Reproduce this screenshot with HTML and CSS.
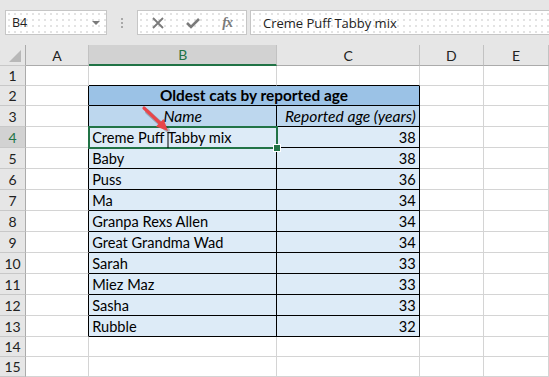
FILE: index.html
```html
<!DOCTYPE html>
<html lang="en">
<head>
    <meta charset="UTF-8">
    <title>Oldest cats</title>
    <link rel="stylesheet" href="styles.css">
</head>
<body>
    <div class="toolbar">
        <div class="namebox">
            <span>B4</span>
            <span class="caret"></span>
        </div>
        <div class="grip"></div>
        <div class="fbtns">
            <svg width="12" height="12" viewBox="0 0 12 12"><path d="M1 1 L11 11 M11 1 L1 11" stroke="#7a7a7a" stroke-width="1.8" fill="none"/></svg>
            <svg width="14" height="12" viewBox="0 0 14 12"><path d="M1 6 L5 10 L13 2" stroke="#7a7a7a" stroke-width="2.6" fill="none"/></svg>
            <span class="fx">fx</span>
        </div>
        <div class="finput">Creme Puff Tabby mix</div>
    </div>

    <div class="sheetWrap">
        <table class="sheet">
            <colgroup>
                <col style="width:26px">
                <col style="width:63px">
                <col style="width:188px">
                <col style="width:142px">
                <col style="width:64px">
                <col style="width:65px">
            </colgroup>
            <tr class="hdr">
                <th class="corner"><span class="tri"></span></th>
                <th>A</th><th class="selCol">B</th><th>C</th><th>D</th><th>E</th>
            </tr>
            <tr class="r20">
                <th>1</th><td></td><td class="topB"></td><td class="topB"></td><td></td><td></td>
            </tr>
            <tr class="r20">
                <th>2</th><td class="leftB"></td><td class="t title" colspan="2">Oldest cats by reported age</td><td></td><td></td>
            </tr>
            <tr>
                <th>3</th><td class="leftB"></td><td class="t sub center">Name</td><td class="t sub num">Reported age (years)</td><td></td><td></td>
            </tr>
            <tr>
                <th class="selRow">4</th><td class="leftB"></td><td class="t active">Creme Puff Tabby mix</td><td class="t num">38</td><td></td><td></td>
            </tr>
            <tr>
                <th>5</th><td class="leftB"></td><td class="t">Baby</td><td class="t num">38</td><td></td><td></td>
            </tr>
            <tr>
                <th>6</th><td class="leftB"></td><td class="t">Puss</td><td class="t num">36</td><td></td><td></td>
            </tr>
            <tr>
                <th>7</th><td class="leftB"></td><td class="t">Ma</td><td class="t num">34</td><td></td><td></td>
            </tr>
            <tr>
                <th>8</th><td class="leftB"></td><td class="t">Granpa Rexs Allen</td><td class="t num">34</td><td></td><td></td>
            </tr>
            <tr>
                <th>9</th><td class="leftB"></td><td class="t">Great Grandma Wad</td><td class="t num">34</td><td></td><td></td>
            </tr>
            <tr>
                <th>10</th><td class="leftB"></td><td class="t">Sarah</td><td class="t num">33</td><td></td><td></td>
            </tr>
            <tr>
                <th>11</th><td class="leftB"></td><td class="t">Miez Maz</td><td class="t num">33</td><td></td><td></td>
            </tr>
            <tr>
                <th>12</th><td class="leftB"></td><td class="t">Sasha</td><td class="t num">33</td><td></td><td></td>
            </tr>
            <tr>
                <th>13</th><td class="leftB"></td><td class="t">Rubble</td><td class="t num">32</td><td></td><td></td>
            </tr>
            <tr class="r20">
                <th>14</th><td></td><td></td><td></td><td></td><td></td>
            </tr>
            <tr class="r20">
                <th>15</th><td></td><td></td><td></td><td></td><td></td>
            </tr>
        </table>

        <!-- pointer arrow + text cursor drawn over the sheet -->
        <svg class="pointer" width="40" height="50" viewBox="0 0 40 50">
            <path d="M6 5 L26 23" stroke="rgba(0,0,0,0.22)" stroke-width="5" stroke-linecap="round" fill="none" transform="translate(1.5 2)"/>
            <path d="M4 3 L22 20" stroke="#e8464a" stroke-width="3.2" stroke-linecap="round" fill="none"/>
            <path d="M28 26 L16 21.5 L23.5 14 Z" fill="#e8464a"/>
            <path d="M28 27 L28 43" stroke="#000" stroke-width="1"/>
        </svg>
    </div>
</body>
</html>
```

FILE: styles.css
```css
*{
    box-sizing: border-box;
}

body{
    margin: 0;
    background: #fff;
    font-family: Lato, "Liberation Sans", sans-serif;
    overflow: hidden;
}

/* formula bar */
.toolbar{
    display: flex;
    align-items: flex-start;
    height: 45px;
    padding: 10px 0 0 5px;
    background: #e6e6e6;
    white-space: nowrap;
}

.namebox, .fbtns, .finput{
    height: 25px;
    border: 1px solid #c6c6c6;
    background-color: #fff;
    background-image: radial-gradient(#e2e2e2 0.7px, transparent 0.9px);
    background-size: 6px 6px;
}

.namebox{
    width: 102px;
    display: flex;
    align-items: center;
    justify-content: space-between;
    padding: 0 6px 0 6px;
    font-family: "Open Sans", sans-serif;
    font-size: 12.5px;
    color: #222;
}

.caret{
    width: 0;
    height: 0;
    border-left: 4px solid transparent;
    border-right: 4px solid transparent;
    border-top: 4px solid #7a7a7a;
}

.grip{
    width: 2px;
    height: 10px;
    margin: 8px 14px 0 14px;
    background: repeating-linear-gradient(#a8a8a8 0 2px, transparent 2px 4px);
}

.fbtns{
    width: 110px;
    display: flex;
    align-items: center;
    justify-content: space-between;
    padding: 0 14px 0 14px;
}

.fx{
    font-family: "Liberation Serif", serif;
    font-style: italic;
    font-weight: bold;
    font-size: 14px;
    color: #7a7a7a;
    letter-spacing: -1px;
}

.finput{
    flex: 1;
    margin-left: 3px;
    border-right: none;
    padding: 3px 0 0 12px;
    font-family: "Open Sans", sans-serif;
    font-size: 13px;
    color: #222;
}

/* sheet */
.sheetWrap{
    position: relative;
}

.sheet{
    table-layout: fixed;
    border-collapse: separate;
    border-spacing: 0;
    width: 549px;
    font-size: 14.6px;
}

.sheet tr{
    height: 21px;
}

.sheet tr.r20{
    height: 20px;
}

.sheet tr.hdr{
    height: 21px;
}

.sheet td, .sheet th{
    padding: 0 3px 1px 3px;
    border-right: 1px solid #d4d4d4;
    border-bottom: 1px solid #d4d4d4;
    vertical-align: bottom;
    line-height: 17px;
    white-space: nowrap;
    overflow: hidden;
    font-weight: normal;
    color: #000;
}

.sheet th{
    background: #e6e6e6;
    color: #222;
    text-align: center;
    font-size: 14px;
}

.sheet tr > th:first-child{
    border-right: 1px solid #ababab;
    border-bottom-color: #c8c8c8;
}

.sheet .hdr th{
    border-right-color: #c2c2c2;
    border-bottom: 1px solid #ababab;
    vertical-align: middle;
    padding-bottom: 0;
}

.sheet .hdr th.selCol{
    background: #d2d2d2;
    color: #217346;
    border-bottom: 2px solid #217346;
}

.sheet th.selRow{
    background: #d2d2d2;
    color: #217346;
    border-right: 2px solid #217346;
}

.corner{
    position: relative;
}

.tri{
    position: absolute;
    right: 4px;
    bottom: 3px;
    width: 0;
    height: 0;
    border-left: 12px solid transparent;
    border-bottom: 12px solid #b8b8b8;
}

/* table on the sheet */
.sheet td.topB{
    border-bottom-color: #000;
}

.sheet td.leftB{
    border-right-color: #000;
}

.sheet td.t{
    background: #ddebf7;
    border-right-color: #000;
    border-bottom-color: #000;
}

.sheet td.title{
    background: #9bc2e6;
    font-weight: bold;
    font-size: 15.4px;
    text-align: center;
}

.sheet td.sub{
    background: #bdd7ee;
    font-style: italic;
    font-size: 15.6px;
}

.center{
    text-align: center;
}

.num{
    text-align: right;
}

.active{
    position: relative;
    overflow: visible !important;
}

.active::after{
    content: "";
    position: absolute;
    left: -1px;
    top: -1px;
    right: -2px;
    bottom: -2px;
    border: 2px solid #217346;
}

.active::before{
    content: "";
    position: absolute;
    right: -5px;
    bottom: -5px;
    width: 6px;
    height: 6px;
    background: #217346;
    border: 1px solid #fff;
    z-index: 2;
}

.pointer{
    position: absolute;
    left: 140px;
    top: 60px;
}
```
